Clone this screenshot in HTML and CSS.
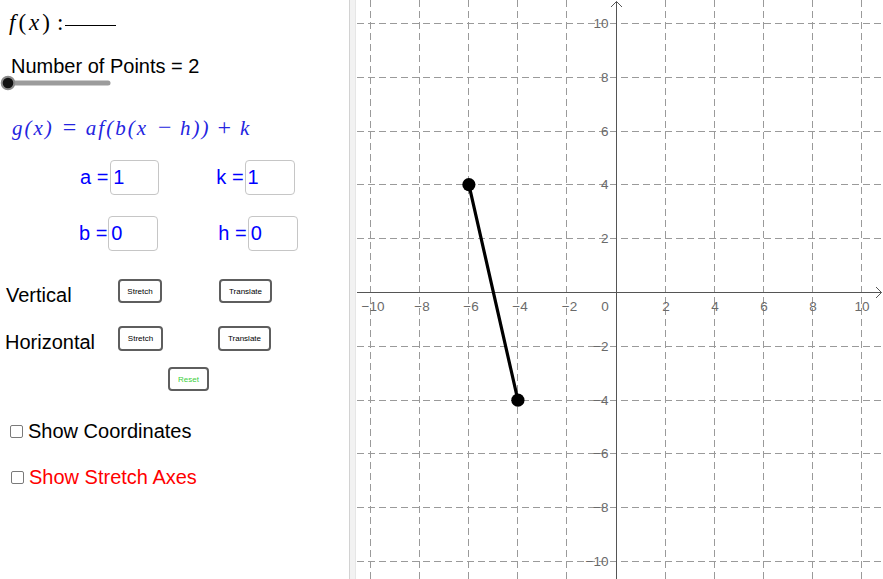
FILE: index.html
```html
<!DOCTYPE html>
<html>
<head>
<meta charset="utf-8">
<link rel="stylesheet" href="styles.css">
</head>
<body>
<div class="app">
  <div class="panel">
    <div class="row fx"><span class="mgroup"><span class="mi">f</span>(<span class="mi">x</span>)</span><span class="colon">:</span><span class="blank"></span></div>
    <div class="row npts">Number of Points = 2</div>
    <div class="row slider">
      <svg class="slider-svg" width="120" height="16" viewBox="0 0 120 16">
        <line x1="8" y1="8" x2="108" y2="8" stroke="#9c9c9c" stroke-width="5" stroke-linecap="round"/>
        <circle cx="8" cy="8" r="6.3" fill="#111" stroke="#8a8a8a" stroke-width="2"/>
      </svg>
    </div>
    <div class="row formula"><span class="expr"><span class="m">g(x)</span><span class="op eq">=</span><span class="m">af(b(x</span><span class="op minus">−</span><span class="m">h))</span><span class="op plus">+</span><span class="m">k</span></span></div>
    <div class="row inputs r1">
      <span class="lbl">a =</span><span class="box box-a">1</span>
      <span class="lbl lbl-k">k =</span><span class="box box-k">1</span>
    </div>
    <div class="row inputs r2">
      <span class="lbl">b =</span><span class="box box-b">0</span>
      <span class="lbl lbl-h">h =</span><span class="box box-h">0</span>
    </div>
    <div class="row btnrow vrow">
      <span class="rowlbl">Vertical</span>
      <span class="btn btn-s">Stretch</span>
      <span class="btn btn-t">Translate</span>
    </div>
    <div class="row btnrow hrow">
      <span class="rowlbl">Horizontal</span>
      <span class="btn btn-s">Stretch</span>
      <span class="btn btn-t">Translate</span>
    </div>
    <div class="row resetrow"><span class="btn btn-reset">Reset</span></div>
    <div class="row chk chk1"><span class="cbox"></span><span class="ctext">Show Coordinates</span></div>
    <div class="row chk chk2"><span class="cbox"></span><span class="ctext red">Show Stretch Axes</span></div>
  </div>
  <div class="divider"></div>
  <svg class="graph" width="527" height="579" viewBox="356 0 527 579">
    <g class="grid" stroke="#9a9a9a" stroke-width="1" stroke-dasharray="7 4" fill="none">
      <line x1="370.5" y1="0" x2="370.5" y2="579"/>
      <line x1="419.5" y1="0" x2="419.5" y2="579"/>
      <line x1="468.5" y1="0" x2="468.5" y2="579"/>
      <line x1="517.5" y1="0" x2="517.5" y2="579"/>
      <line x1="566.5" y1="0" x2="566.5" y2="579"/>
      <line x1="665.5" y1="0" x2="665.5" y2="579"/>
      <line x1="714.5" y1="0" x2="714.5" y2="579"/>
      <line x1="763.5" y1="0" x2="763.5" y2="579"/>
      <line x1="812.5" y1="0" x2="812.5" y2="579"/>
      <line x1="861.5" y1="0" x2="861.5" y2="579"/>
      <line x1="357" y1="23.5" x2="883" y2="23.5"/>
      <line x1="357" y1="77.5" x2="883" y2="77.5"/>
      <line x1="357" y1="131.5" x2="883" y2="131.5"/>
      <line x1="357" y1="184.5" x2="883" y2="184.5"/>
      <line x1="357" y1="238.5" x2="883" y2="238.5"/>
      <line x1="357" y1="346.5" x2="883" y2="346.5"/>
      <line x1="357" y1="400.5" x2="883" y2="400.5"/>
      <line x1="357" y1="453.5" x2="883" y2="453.5"/>
      <line x1="357" y1="507.5" x2="883" y2="507.5"/>
      <line x1="357" y1="561.5" x2="883" y2="561.5"/>
    </g>
    <g class="axes" stroke="#555" stroke-width="1" fill="none">
      <line x1="616.5" y1="1.5" x2="616.5" y2="579"/>
      <line x1="357" y1="292.5" x2="881.5" y2="292.5"/>
      <polyline points="611,7 616.5,1.5 622,7"/>
      <polyline points="876,287 881.5,292.5 876,298"/>
    </g>
    <g class="labels" fill="#6a6a6a" font-family="Liberation Sans, Arial, sans-serif" font-size="13.5">
      <text x="373" y="311" text-anchor="middle">−10</text>
      <text x="422" y="311" text-anchor="middle">−8</text>
      <text x="471" y="311" text-anchor="middle">−6</text>
      <text x="520" y="311" text-anchor="middle">−4</text>
      <text x="569.5" y="311" text-anchor="middle">−2</text>
      <text x="605" y="311" text-anchor="middle">0</text>
      <text x="666" y="311" text-anchor="middle">2</text>
      <text x="715" y="311" text-anchor="middle">4</text>
      <text x="764" y="311" text-anchor="middle">6</text>
      <text x="813" y="311" text-anchor="middle">8</text>
      <text x="862" y="311" text-anchor="middle">10</text>
      <text x="608.5" y="28.3" text-anchor="end">10</text>
      <text x="608.5" y="82.3" text-anchor="end">8</text>
      <text x="608.5" y="136.3" text-anchor="end">6</text>
      <text x="608.5" y="189.3" text-anchor="end">4</text>
      <text x="608.5" y="243.3" text-anchor="end">2</text>
      <text x="608.5" y="351.3" text-anchor="end">−2</text>
      <text x="608.5" y="405.3" text-anchor="end">−4</text>
      <text x="608.5" y="458.3" text-anchor="end">−6</text>
      <text x="608.5" y="512.3" text-anchor="end">−8</text>
      <text x="608.5" y="566.3" text-anchor="end">−10</text>
    </g>
    <line x1="468.9" y1="184.6" x2="517.9" y2="400.2" stroke="#000" stroke-width="3.2" stroke-linecap="round"/>
    <circle cx="468.9" cy="184.6" r="6.6" fill="#000"/>
    <circle cx="517.9" cy="400.2" r="6.6" fill="#000"/>
  </svg>
</div>
</body>
</html>
```

FILE: styles.css
```css
* {
  box-sizing: border-box;
}

html, body {
  margin: 0;
  padding: 0;
  background: #fff;
}

body {
  width: 883px;
  height: 579px;
  overflow: hidden;
  font-family: "Liberation Sans", Arial, sans-serif;
  color: #000;
}

.app {
  display: flex;
  height: 579px;
}

.panel {
  width: 349px;
  flex: none;
  display: flex;
  flex-direction: column;
}

.divider {
  width: 7px;
  flex: none;
  background: #f2f2f2;
  border-left: 1px solid #d2d2d2;
  border-right: 1px solid #e6e6e6;
}

.graph {
  flex: none;
  display: block;
}

.row {
  display: flex;
  align-items: center;
  flex: none;
  white-space: nowrap;
}

/* f(x) : ____ */
.fx {
  height: 46px;
  padding-left: 9px;
  font-family: "Liberation Serif", "Times New Roman", serif;
  font-size: 23px;
}

.mgroup {
  letter-spacing: 3px;
}

.mi {
  font-style: italic;
}

.colon {
  margin-left: 4px;
}

.blank {
  width: 51px;
  height: 0;
  border-bottom: 1px solid #000;
  margin-left: 2px;
  margin-top: 5px;
}

/* Number of points */
.npts {
  height: 30px;
  margin-top: 5px;
  padding-left: 11px;
  font-size: 20px;
}

.slider {
  height: 16px;
  margin-top: -6px;
}

.slider-svg {
  display: block;
}

/* g(x) formula */
.formula {
  height: 38px;
  margin-top: 17px;
  padding-left: 12px;
  font-family: "Liberation Serif", "Times New Roman", serif;
  font-size: 21px;
  color: #2424e0;
}

.formula .m {
  font-style: italic;
  letter-spacing: 2px;
}

.formula .op {
  font-size: 24px;
}

.formula .eq {
  margin: 0 9.5px 0 9px;
}

.formula .minus {
  margin: 0 8.5px 0 10px;
}

.formula .plus {
  margin: 0 9px 0 7px;
}

/* Inputs */
.inputs {
  height: 35px;
}

.r1 {
  margin-top: 14px;
  padding-left: 80px;
}

.r2 {
  margin-top: 21px;
  padding-left: 79px;
}

.lbl {
  font-size: 20px;
  color: #0000ff;
}

.lbl-k {
  margin-left: 57px;
}

.lbl-h {
  margin-left: 60px;
}

.box {
  height: 35px;
  border: 1px solid #c6c6c6;
  border-radius: 4px;
  font-size: 20px;
  color: #0000ff;
  display: flex;
  align-items: center;
  padding-left: 2px;
  background: #fff;
}

.box-a {
  width: 49px;
  margin-left: 2px;
}

.box-k {
  width: 50px;
  margin-left: 1px;
}

.box-b {
  width: 50px;
  margin-left: 1px;
}

.box-h {
  width: 50px;
  margin-left: 1px;
}

/* Button rows */
.btnrow .rowlbl {
  font-size: 20px;
  flex: none;
}

.vrow {
  height: 24px;
  margin-top: 28px;
}

.vrow .rowlbl {
  width: 118px;
  padding-left: 6px;
  margin-top: 8px;
}

.vrow .btn-s {
  width: 44px;
}

.vrow .btn-t {
  width: 53px;
  margin-left: 57px;
}

.hrow {
  height: 25px;
  margin-top: 23px;
}

.hrow .rowlbl {
  width: 118px;
  padding-left: 5px;
  margin-top: 8px;
}

.hrow .btn-s {
  width: 45px;
}

.hrow .btn-t {
  width: 53px;
  margin-left: 55px;
}

.btn {
  height: 100%;
  border: 2px solid #5e5e5e;
  border-radius: 4px;
  background: #fff;
  font-size: 8px;
  color: #000;
  display: flex;
  align-items: center;
  justify-content: center;
  flex: none;
}

.resetrow {
  height: 24px;
  margin-top: 16px;
  padding-left: 168px;
}

.btn-reset {
  width: 41px;
  color: #3cd03c;
}

/* Checkboxes */
.chk {
  height: 20px;
}

.chk1 {
  margin-top: 30px;
  padding-left: 10px;
}

.chk2 {
  margin-top: 26px;
  padding-left: 11px;
}

.cbox {
  width: 13px;
  height: 13px;
  border: 1px solid #7a7a7a;
  border-radius: 2px;
  background: #fff;
  flex: none;
}

.ctext {
  margin-left: 5px;
  font-size: 20px;
}

.red {
  color: #ff0000;
}
```
